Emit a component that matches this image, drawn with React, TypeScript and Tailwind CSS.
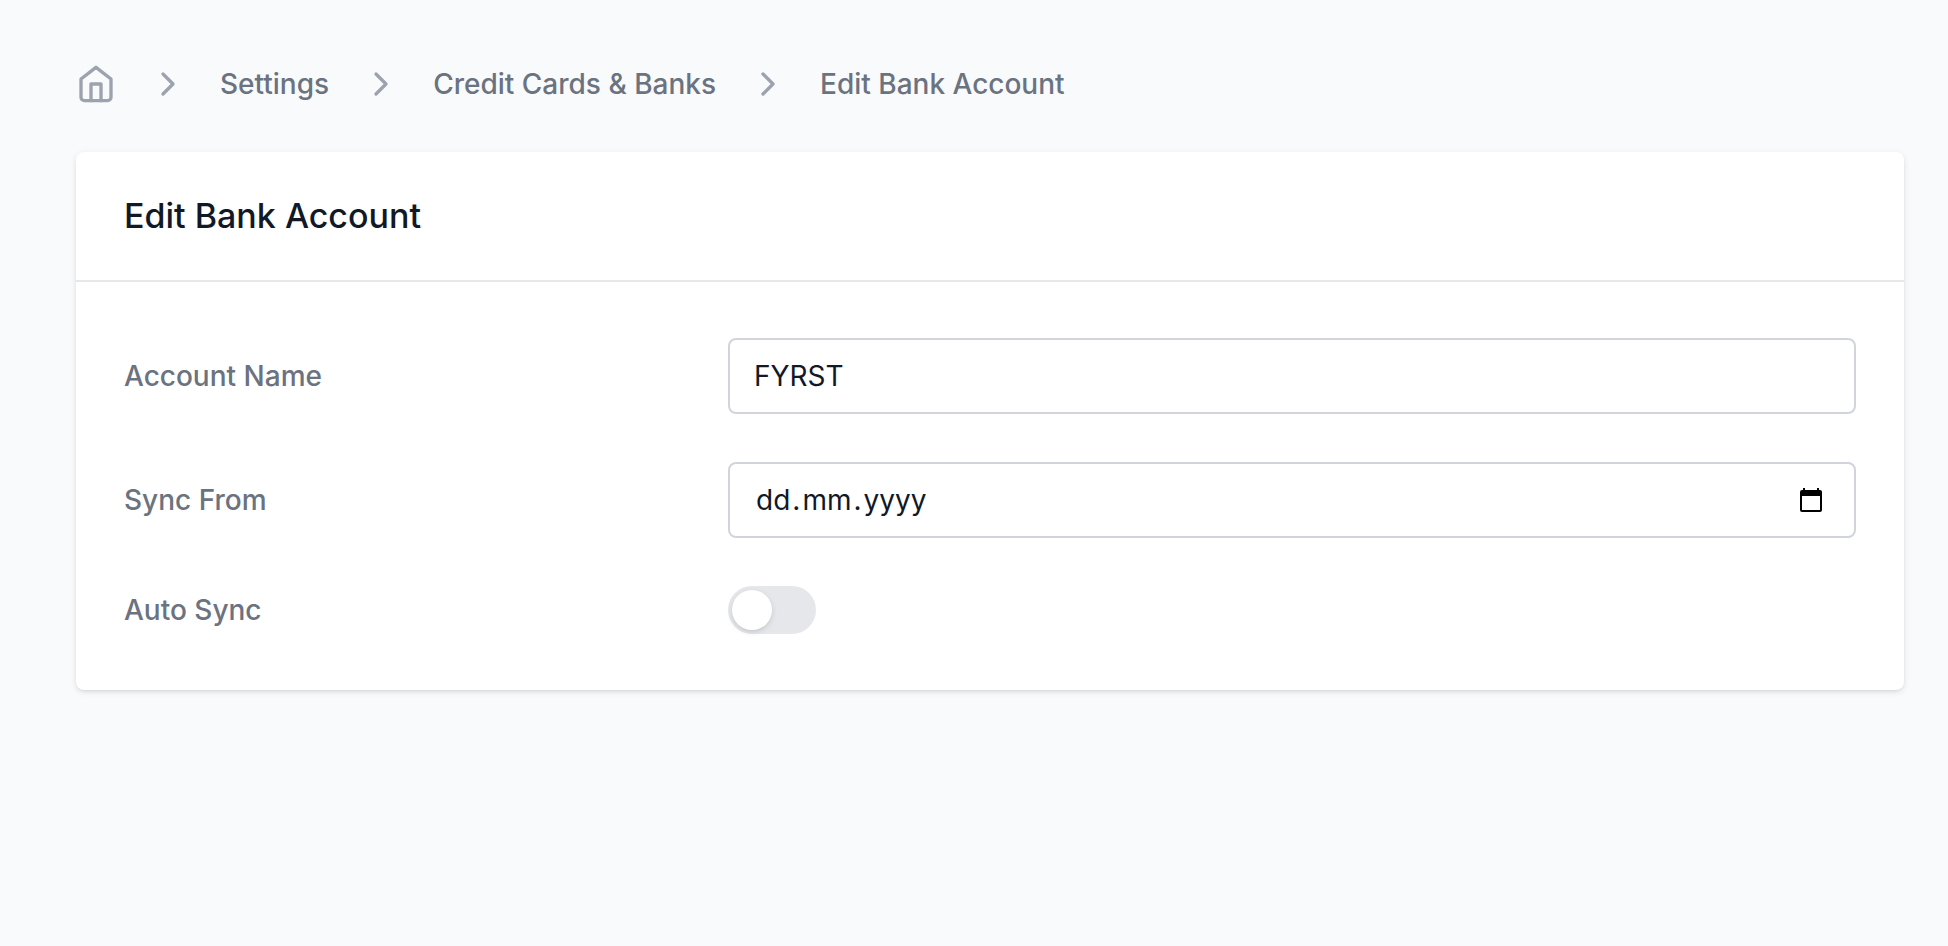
import * as React from "react";

type Crumb = {
  label: string;
  href: string;
};

const crumbs: Crumb[] = [
  { label: "Settings", href: "#settings" },
  { label: "Credit Cards & Banks", href: "#banks" },
  { label: "Edit Bank Account", href: "#edit" },
];

const labelClass = "text-[28px] leading-10 font-medium text-[#6b7280]";
const fieldClass =
  "h-19 w-full rounded-lg border-2 border-[#d1d5db] bg-white text-[28px] leading-10 text-[#111827] outline-none";
const segmentClass =
  "field-sizing-content bg-transparent outline-none placeholder:text-[#111827]";

function HomeIcon() {
  return (
    <svg
      className="size-10"
      viewBox="0 0 24 24"
      fill="none"
      stroke="currentColor"
      strokeWidth="2"
      strokeLinecap="round"
      strokeLinejoin="round"
      aria-hidden="true"
    >
      <path d="M3 9l9-7 9 7v11a2 2 0 0 1-2 2H5a2 2 0 0 1-2-2z" />
      <path d="M9 22V12h6v10" />
    </svg>
  );
}

function ChevronIcon() {
  return (
    <svg
      className="size-10 shrink-0 text-[#9ca3af]"
      viewBox="0 0 24 24"
      fill="none"
      stroke="currentColor"
      strokeWidth="2"
      strokeLinecap="round"
      strokeLinejoin="round"
      aria-hidden="true"
    >
      <path d="M9 18l6-6-6-6" />
    </svg>
  );
}

function CalendarIcon() {
  return (
    <svg className="h-6 w-[22px]" viewBox="0 0 22 24" aria-hidden="true">
      <path
        fill="currentColor"
        fillRule="evenodd"
        d="M3 0h2v2h12V0h2v2h1a2 2 0 0 1 2 2v18a2 2 0 0 1-2 2H2a2 2 0 0 1-2-2V4a2 2 0 0 1 2-2h1zM2 8v14h18V8z"
      />
    </svg>
  );
}

function Breadcrumbs() {
  return (
    <nav aria-label="Breadcrumb" className="mb-12">
      <ol className="flex items-center gap-8">
        <li>
          <a href="#home" aria-label="Home" className="block text-[#9ca3af]">
            <HomeIcon />
          </a>
        </li>
        {crumbs.map((crumb) => (
          <li key={crumb.href} className="flex items-center gap-8">
            <ChevronIcon />
            <a
              href={crumb.href}
              className="text-[28px] leading-10 font-medium whitespace-nowrap text-[#6b7280] hover:text-gray-700"
            >
              {crumb.label}
            </a>
          </li>
        ))}
      </ol>
    </nav>
  );
}

export default function App() {
  const [name, setName] = React.useState("FYRST");
  const [day, setDay] = React.useState("");
  const [month, setMonth] = React.useState("");
  const [year, setYear] = React.useState("");
  const [autoSync, setAutoSync] = React.useState(false);

  return (
    <div className="min-h-screen bg-[#f9fafc] pt-16 pr-11 pb-16 pl-19 font-['Inter',sans-serif]">
      <Breadcrumbs />

      <form
        onSubmit={(e) => e.preventDefault()}
        className="rounded-lg bg-white shadow-[0_2px_6px_0_rgb(0_0_0/0.1),0_2px_4px_-2px_rgb(0_0_0/0.1)]"
      >
        <div className="border-b-2 border-[#e5e7eb] px-12 py-10">
          <h1 className="text-[34px] leading-12 font-medium text-[#111827]">
            Edit Bank Account
          </h1>
        </div>

        <div className="grid grid-cols-3 items-center gap-x-20 gap-y-12 px-12 py-14">
          <label htmlFor="name" className={labelClass}>
            Account Name
          </label>
          <div className="col-span-2">
            <input
              id="name"
              type="text"
              value={name}
              onChange={(e) => setName(e.target.value)}
              className={`${fieldClass} px-6 focus:border-indigo-500`}
            />
          </div>

          <label htmlFor="sync-from" className={labelClass}>
            Sync From
          </label>
          <div
            className={`${fieldClass} col-span-2 flex items-center pr-8 pl-6 focus-within:border-indigo-500`}
          >
            <input
              id="sync-from"
              type="text"
              inputMode="numeric"
              maxLength={2}
              placeholder="dd"
              value={day}
              onChange={(e) => setDay(e.target.value)}
              className={`${segmentClass} ml-0.5`}
            />
            <span className="px-0.5">.</span>
            <input
              type="text"
              inputMode="numeric"
              aria-label="Month"
              maxLength={2}
              placeholder="mm"
              value={month}
              onChange={(e) => setMonth(e.target.value)}
              className={segmentClass}
            />
            <span className="px-0.5">.</span>
            <input
              type="text"
              inputMode="numeric"
              aria-label="Year"
              maxLength={4}
              placeholder="yyyy"
              value={year}
              onChange={(e) => setYear(e.target.value)}
              className={segmentClass}
            />
            <button
              type="button"
              aria-label="Pick a date"
              className="ml-auto text-black"
            >
              <CalendarIcon />
            </button>
          </div>

          <label htmlFor="auto-sync" className={labelClass}>
            Auto Sync
          </label>
          <div className="col-span-2 flex">
            <input
              id="auto-sync"
              type="checkbox"
              role="switch"
              checked={autoSync}
              onChange={(e) => setAutoSync(e.target.checked)}
              className="h-12 w-22 cursor-pointer appearance-none rounded-full bg-[#e5e7eb] p-1 transition-colors before:block before:size-10 before:rounded-full before:bg-white before:shadow-[0_2px_6px_0_rgb(0_0_0/0.1),0_2px_4px_-2px_rgb(0_0_0/0.1)] before:transition-transform checked:bg-indigo-600 checked:before:translate-x-10"
            />
          </div>
        </div>
      </form>
    </div>
  );
}
